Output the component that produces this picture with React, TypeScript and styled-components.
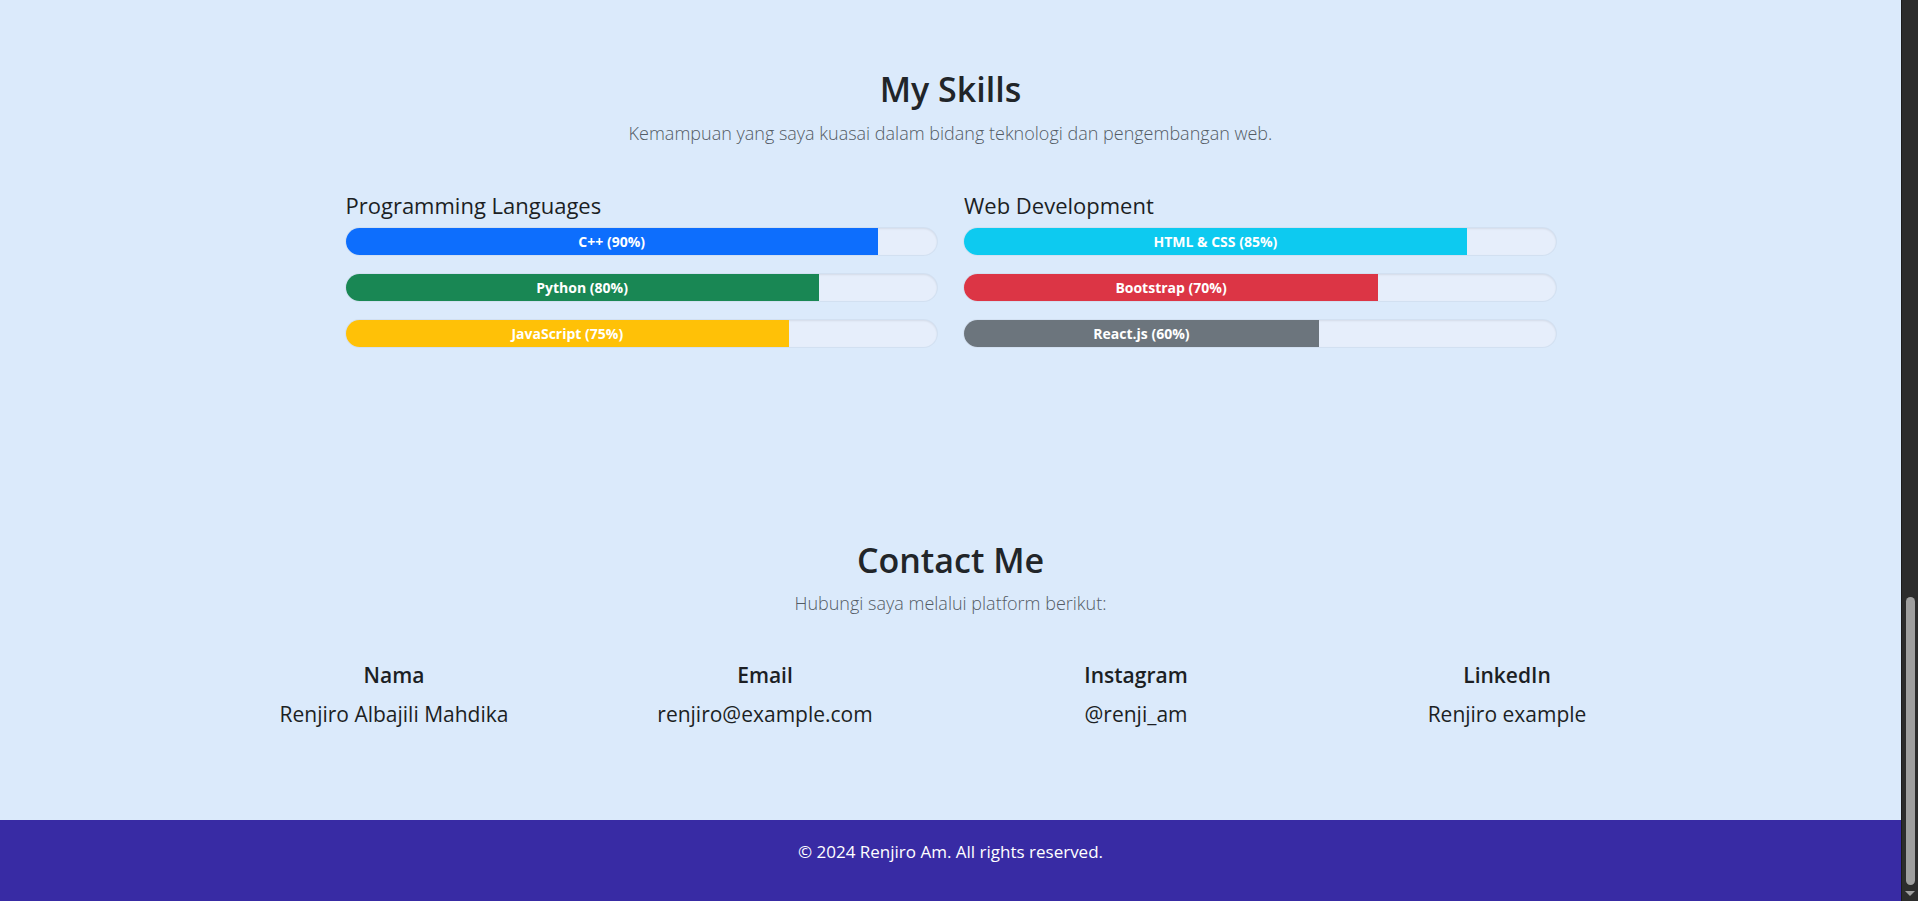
import styled, { createGlobalStyle } from "styled-components";

const GlobalStyle = createGlobalStyle`
  html, body {
    margin: 0;
    padding: 0;
    overflow: hidden;
  }

  body {
    font-family: "Open Sans", "Noto Sans", sans-serif;
    color: #212529;
    background: #dbeafb;
  }
`;

const languages = [
  { name: "C++", value: 90, color: "#0d6efd" },
  { name: "Python", value: 80, color: "#198754" },
  { name: "JavaScript", value: 75, color: "#ffc107" },
];

const webDev = [
  { name: "HTML & CSS", value: 85, color: "#0dcaf0" },
  { name: "Bootstrap", value: 70, color: "#dc3545" },
  { name: "React.js", value: 60, color: "#6c757d" },
];

const contacts = [
  { label: "Nama", value: "Renjiro Albajili Mahdika" },
  { label: "Email", value: "renjiro@example.com" },
  { label: "Instagram", value: "@renji_am" },
  { label: "LinkedIn", value: "Renjiro example" },
];

const App = () => {
  return (
    <Page>
      <GlobalStyle />
      <Main>
        <SkillsSection>
          <SectionTitle>My Skills</SectionTitle>
          <SectionLead>
            Kemampuan yang saya kuasai dalam bidang teknologi dan pengembangan web.
          </SectionLead>
          <SkillGrid>
            <SkillColumn>
              <ColumnTitle>Programming Languages</ColumnTitle>
              {languages.map((s) => (
                <Track key={s.name}>
                  <Fill $color={s.color} style={{ width: `${s.value}%` }}>
                    {s.name} ({s.value}%)
                  </Fill>
                </Track>
              ))}
            </SkillColumn>
            <SkillColumn>
              <ColumnTitle>Web Development</ColumnTitle>
              {webDev.map((s) => (
                <Track key={s.name}>
                  <Fill $color={s.color} style={{ width: `${s.value}%` }}>
                    {s.name} ({s.value}%)
                  </Fill>
                </Track>
              ))}
            </SkillColumn>
          </SkillGrid>
        </SkillsSection>

        <ContactSection>
          <SectionTitle>Contact Me</SectionTitle>
          <ContactLead>Hubungi saya melalui platform berikut:</ContactLead>
          <ContactGrid>
            {contacts.map((c) => (
              <ContactItem key={c.label}>
                <ContactLabel>{c.label}</ContactLabel>
                <ContactValue>{c.value}</ContactValue>
              </ContactItem>
            ))}
          </ContactGrid>
        </ContactSection>

        <Footer>© 2024 Renjiro Am. All rights reserved.</Footer>
      </Main>
      <ScrollBar>
        <ScrollThumb />
        <ScrollArrow />
      </ScrollBar>
    </Page>
  );
};

const Page = styled.div`
  display: flex;
  height: 100vh;
  width: 100vw;
`;

const Main = styled.main`
  flex: 1;
  display: flex;
  flex-direction: column;
  min-width: 0;
`;

const SkillsSection = styled.section`
  padding-top: 69px;
  display: flex;
  flex-direction: column;
  align-items: center;
`;

const SectionTitle = styled.h2`
  margin: 0;
  font-size: 34px;
  line-height: 40px;
  font-weight: 600;
  color: #212529;
  text-align: center;
`;

const SectionLead = styled.p`
  margin: 10px 0 0;
  font-size: 18px;
  line-height: 28px;
  font-weight: 300;
  color: #535c65;
  text-align: center;
`;

const SkillGrid = styled.div`
  margin-top: 44px;
  width: 1210px;
  display: grid;
  grid-template-columns: 1fr 1fr;
  column-gap: 27px;
`;

const SkillColumn = styled.div`
  display: flex;
  flex-direction: column;
  gap: 19px;
`;

const ColumnTitle = styled.h4`
  margin: 0 0 -10px;
  font-size: 22px;
  line-height: 28px;
  font-weight: 500;
  color: #1c1f24;
`;

const Track = styled.div`
  height: 27px;
  border-radius: 14px;
  background: #e6eefb;
  box-shadow: inset 0 1px 2px rgba(0, 0, 0, 0.08), 0 0 0 1px rgba(0, 0, 0, 0.04);
  overflow: hidden;
  display: flex;
`;

const Fill = styled.div<{ $color: string }>`
  background: ${(p) => p.$color};
  color: #fff;
  font-size: 14px;
  font-weight: 700;
  display: flex;
  align-items: center;
  justify-content: center;
  white-space: nowrap;
`;

const ContactSection = styled.section`
  margin-top: 193px;
  display: flex;
  flex-direction: column;
  align-items: center;
`;

const ContactLead = styled(SectionLead)`
  margin-top: 9px;
`;

const ContactGrid = styled.div`
  margin-top: 45px;
  width: 1484px;
  display: grid;
  grid-template-columns: repeat(4, 1fr);
`;

const ContactItem = styled.div`
  display: flex;
  flex-direction: column;
  align-items: center;
  gap: 11px;
`;

const ContactLabel = styled.h5`
  margin: 0;
  font-size: 21px;
  line-height: 27px;
  font-weight: 600;
  color: #1c1f24;
`;

const ContactValue = styled.p`
  margin: 0;
  font-size: 21px;
  line-height: 28px;
  color: #1c1f24;
`;

const Footer = styled.footer`
  margin-top: auto;
  height: 81px;
  box-sizing: border-box;
  padding-top: 20px;
  background: #382ba4;
  color: #fff;
  font-size: 17px;
  line-height: 24px;
  text-align: center;
`;

const ScrollBar = styled.div`
  width: 17px;
  flex-shrink: 0;
  background: #2c2c2c;
  border-left: 1px solid #1b1b1b;
  box-sizing: border-box;
  display: flex;
  flex-direction: column;
  align-items: center;
  justify-content: flex-end;
  padding-bottom: 5px;
`;

const ScrollThumb = styled.div`
  width: 9px;
  height: 288px;
  border-radius: 5px;
  background: #9f9f9f;
  margin-bottom: 6px;
`;

const ScrollArrow = styled.div`
  width: 0;
  height: 0;
  border-left: 5px solid transparent;
  border-right: 5px solid transparent;
  border-top: 5px solid #9f9f9f;
`;

export default App;
